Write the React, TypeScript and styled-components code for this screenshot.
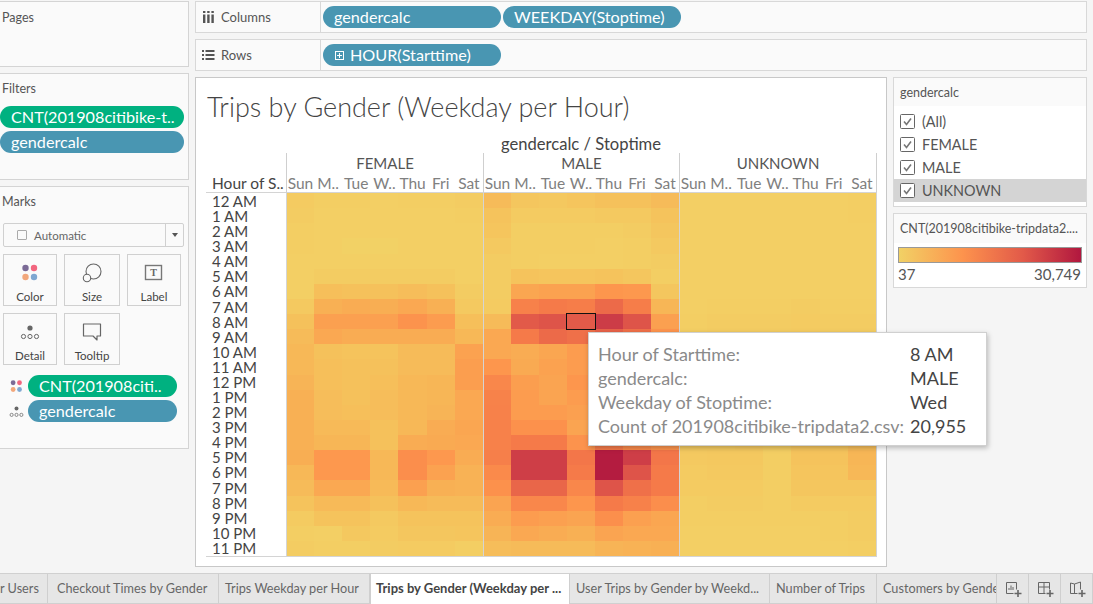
import React from "react";
import styled, { createGlobalStyle } from "styled-components";

const GlobalStyle = createGlobalStyle`
  html, body {
    margin: 0;
    padding: 0;
    background: #f5f5f5;
    font-family: "Lato", "Open Sans", sans-serif;
    color: #555;
  }
  * { box-sizing: border-box; }
`;

const Page = styled.div`
  position: relative;
  width: 1093px;
  height: 604px;
  overflow: hidden;
  display: flex;
  flex-direction: column;
  background: #f5f5f5;
`;

const Workspace = styled.div`
  flex: none;
  height: 573px;
  display: flex;
  gap: 6px;
  padding-top: 1px;
`;

const LeftColumn = styled.div`
  flex: none;
  width: 190px;
  margin-left: -1px;
  display: flex;
  flex-direction: column;
  gap: 6px;
`;

const SidePanel = styled.section<{ $h: number }>`
  height: ${(p) => p.$h}px;
  background: #fafafa;
  border: 1px solid #d4d4d4;
  padding: 0 4px 0 3px;
`;

const PanelTitle = styled.div<{ $first?: boolean }>`
  font-size: 12.5px;
  line-height: 16px;
  color: #555;
  margin-left: -1px;
  padding-top: ${(p) => (p.$first ? "8px" : "7px")};
`;

const Pill = styled.div<{ $green?: boolean; $w?: number }>`
  height: 22px;
  width: ${(p) => (p.$w ? `${p.$w}px` : "100%")};
  flex: none;
  border-radius: 11px;
  background: ${(p) => (p.$green ? "#00b180" : "#4996b2")};
  color: #fff;
  font-size: 16.2px;
  line-height: 22px;
  padding-left: 11px;
  white-space: nowrap;
  overflow: hidden;
  display: flex;
  align-items: center;
  gap: 5px;
`;

const PillStack = styled.div`
  display: flex;
  flex-direction: column;
  gap: 3px;
  margin: 9px 0 0 -3px;
  width: 184px;
`;

const MarkSelect = styled.div`
  margin-top: 13px;
  height: 24px;
  border: 1px solid #d0d0d0;
  border-radius: 2px;
  background: #fafafa;
  display: flex;
  align-items: center;
  font-size: 11.5px;
  color: #666;
  padding-left: 13px;
  gap: 7px;
`;

const MarkSelectArrow = styled.div`
  margin-left: auto;
  width: 18px;
  height: 22px;
  border-left: 1px solid #d0d0d0;
  display: flex;
  align-items: center;
  justify-content: center;
  &::after {
    content: "";
    border-left: 3.5px solid transparent;
    border-right: 3.5px solid transparent;
    border-top: 4px solid #555;
  }
`;

const EmptyBox = styled.span`
  width: 10px;
  height: 10px;
  border: 1px solid #aaa;
  border-radius: 1px;
`;

const MarkGrid = styled.div`
  display: grid;
  grid-template-columns: 54px 56px 54px;
  column-gap: 7px;
  row-gap: 7px;
  margin-top: 7px;
`;

const MarkCard = styled.div`
  height: 52px;
  border: 1px solid #d0d0d0;
  background: #fafafa;
  display: flex;
  flex-direction: column;
  align-items: center;
  font-size: 11.5px;
  color: #444;
  padding-top: 8px;
  svg { flex: none; height: 20px; margin-bottom: 7px; }
`;

const MarkFields = styled.div`
  margin-top: 10px;
  display: flex;
  flex-direction: column;
  gap: 3px;
`;

const MarkField = styled.div`
  display: flex;
  align-items: center;
  gap: 4px;
  padding-left: 6px;
`;

const MainColumn = styled.div`
  flex: 1;
  display: flex;
  flex-direction: column;
  padding-right: 6px;
  min-width: 0;
`;

const Shelf = styled.div`
  height: 32px;
  margin-bottom: 6px;
  background: #fafafa;
  border: 1px solid #d8d8d8;
  display: flex;
`;

const ShelfLabel = styled.div`
  flex: none;
  width: 125px;
  border-right: 1px solid #d8d8d8;
  display: flex;
  align-items: center;
  font-size: 13px;
  color: #555;
  padding-left: 6px;
  gap: 6px;
`;

const ShelfPills = styled.div`
  display: flex;
  align-items: center;
  gap: 2px;
  padding-left: 2px;
`;

const WorkRow = styled.div`
  display: flex;
  gap: 6px;
`;

const VizPanel = styled.section`
  flex: none;
  width: 692px;
  height: 490px;
  background: #fff;
  border: 1px solid #c8c8c8;
  padding: 0 0 0 10px;
`;

const VizTitle = styled.h1`
  margin: 0;
  padding: 13px 0 0 1px;
  font-size: 27px;
  line-height: 32px;
  font-weight: 300;
  color: #444;
  height: 55px;
  white-space: nowrap;
`;

const AxisCaption = styled.div`
  margin-left: 80px;
  width: 590px;
  height: 20px;
  text-align: center;
  font-size: 16.6px;
  line-height: 22px;
  color: #444;
`;

const Table = styled.div`
  display: grid;
  grid-template-columns: 80px 197px 196px 198px;
  grid-template-rows: 40px 363px;
  border-bottom: 1px solid #d4d4d4;
  width: 671px;
`;

const Corner = styled.div`
  border-bottom: 1px solid #d4d4d4;
  display: flex;
  align-items: flex-end;
  padding: 0 0 0 6px;
  font-size: 15.5px;
  line-height: 18px;
  color: #444;
  white-space: nowrap;
`;

const PaneHeader = styled.div<{ $last?: boolean }>`
  border-left: 1px solid #cfcfcf;
  border-right: ${(p) => (p.$last ? "1px solid #cfcfcf" : "none")};
  border-bottom: 1px solid #d4d4d4;
  display: flex;
  flex-direction: column;
`;

const GenderName = styled.div`
  height: 20px;
  text-align: center;
  font-size: 15px;
  line-height: 21px;
  color: #555;
`;

const DayRow = styled.div`
  display: grid;
  grid-template-columns: 27px repeat(6, 1fr);
  height: 19px;
`;

const DayName = styled.span`
  text-align: center;
  font-size: 15.5px;
  line-height: 20px;
  color: #808080;
  white-space: nowrap;
`;

const HourList = styled.div`
  display: grid;
  grid-template-rows: repeat(24, 1fr);
  padding: 1px 0 0 6px;
`;

const HourLabel = styled.div`
  font-size: 15px;
  line-height: 15px;
  color: #444;
  white-space: nowrap;
`;

const Pane = styled.div<{ $last?: boolean }>`
  border-left: 1px solid #d4d4d4;
  border-right: ${(p) => (p.$last ? "1px solid #d4d4d4" : "none")};
  display: grid;
  grid-template-columns: 27px repeat(6, 1fr);
  grid-template-rows: repeat(24, 1fr);
`;

const Cell = styled.div<{ $marked?: boolean }>`
  outline: ${(p) => (p.$marked ? "1px solid #111" : "none")};
  position: ${(p) => (p.$marked ? "relative" : "static")};
`;

const RightColumn = styled.div`
  flex: none;
  width: 194px;
  display: flex;
  flex-direction: column;
  gap: 6px;
`;

const LegendCard = styled.section<{ $h: number }>`
  height: ${(p) => p.$h}px;
  background: #fff;
  border: 1px solid #d8d8d8;
`;

const LegendHead = styled.div<{ $h: number }>`
  height: ${(p) => p.$h}px;
  background: #fafafa;
  font-size: 12.5px;
  color: #555;
  padding: 6px 0 0 6px;
  line-height: 17px;
  white-space: nowrap;
`;

const FilterRow = styled.div<{ $active?: boolean }>`
  height: 23px;
  display: flex;
  align-items: center;
  gap: 7px;
  padding-left: 6px;
  font-size: 14.4px;
  color: #555;
  background: ${(p) => (p.$active ? "#d4d4d4" : "transparent")};
`;

const FilterList = styled.div`
  padding-top: 4px;
`;

const GradientBar = styled.div`
  margin: 4px 4px 0;
  height: 16px;
  border: 1px solid #999;
  background: linear-gradient(90deg, #f1d165 0%, #fd934d 35%, #e25a49 68%, #b1173f 100%);
`;

const GradientScale = styled.div`
  display: flex;
  justify-content: space-between;
  padding: 1px 5px 0 4px;
  font-size: 15px;
  line-height: 20px;
  color: #555;
`;

const Tooltip = styled.div`
  position: absolute;
  left: 588px;
  top: 332px;
  width: 399px;
  height: 114px;
  background: #fff;
  border: 1px solid #d0d0d0;
  box-shadow: 1px 2px 5px rgba(0, 0, 0, 0.25);
  padding: 9px 0 0 9px;
  display: grid;
  grid-template-columns: 312px 1fr;
  grid-auto-rows: 24px;
  font-size: 18px;
  line-height: 24px;
  white-space: nowrap;
`;

const TipKey = styled.span`
  color: #8a8a8a;
`;

const TipValue = styled.span`
  color: #444;
`;

const TabBar = styled.nav`
  flex: none;
  height: 31px;
  background: #e6e6e6;
  border-top: 1px solid #d0d0d0;
  border-bottom: 1px solid #d0d0d0;
  display: flex;
`;

const Tab = styled.div<{ $w: number; $pad: number; $active?: boolean }>`
  flex: none;
  width: ${(p) => p.$w}px;
  height: ${(p) => (p.$active ? "30px" : "29px")};
  background: ${(p) => (p.$active ? "#fff" : "transparent")};
  border-right: 1px solid #cfcfcf;
  border-left: ${(p) => (p.$active ? "1px solid #cfcfcf" : "none")};
  font-size: ${(p) => (p.$active ? "13px" : "12.7px")};
  font-weight: ${(p) => (p.$active ? 700 : 400)};
  color: ${(p) => (p.$active ? "#444" : "#666")};
  line-height: 29px;
  padding-left: ${(p) => p.$pad}px;
  white-space: nowrap;
  overflow: hidden;
`;

const TabIcon = styled.div`
  flex: none;
  width: 32px;
  height: 29px;
  border-right: 1px solid #cfcfcf;
  display: flex;
  align-items: center;
  justify-content: center;
`;

const DotsIcon = ({ size = 20 }: { size?: number }) => (
  <svg width={size} height={size} viewBox="0 0 20 20">
    <circle cx="5.5" cy="5" r="3.2" fill="#7b6a96" />
    <circle cx="14" cy="5" r="3.2" fill="#f2667f" />
    <circle cx="5.5" cy="14" r="3.2" fill="#f2a77b" />
    <circle cx="14" cy="14" r="3.2" fill="#7fa7d1" />
  </svg>
);

const SizeIcon = () => (
  <svg width="20" height="20" viewBox="0 0 20 20" fill="none" stroke="#666" strokeWidth="1.1">
    <circle cx="11.5" cy="8.5" r="7.5" fill="#fafafa" />
    <circle cx="5" cy="15" r="3.7" fill="#fafafa" />
  </svg>
);

const LabelIcon = () => (
  <svg width="20" height="20" viewBox="0 0 20 20" fill="none">
    <rect x="1.5" y="2.5" width="16" height="14" stroke="#777" strokeWidth="1.4" />
    <text x="9.5" y="13" fontSize="10" fontWeight="700" fontFamily="Liberation Serif" fill="#666" textAnchor="middle">T</text>
  </svg>
);

const DetailIcon = ({ size = 20 }: { size?: number }) => (
  <svg width={size} height={size} viewBox="0 0 20 20" fill="none" stroke="#666">
    <circle cx="10" cy="6" r="2.6" fill="#666" stroke="none" />
    <circle cx="3.5" cy="14.5" r="2.1" />
    <circle cx="10" cy="14.5" r="2.1" />
    <circle cx="16.5" cy="14.5" r="2.1" />
  </svg>
);

const TooltipIcon = () => (
  <svg width="20" height="20" viewBox="0 0 20 20" fill="none" stroke="#666" strokeWidth="1.2">
    <path d="M1.5 2h17v12h-3.5v4l-4-4H1.5z" strokeLinejoin="round" />
  </svg>
);

const ColumnsIcon = () => (
  <svg width="13" height="12" viewBox="0 0 13 12" fill="#555">
    <rect x="1" y="0" width="2.4" height="2" />
    <rect x="1" y="3.5" width="2.4" height="8.5" />
    <rect x="5.2" y="0" width="2.4" height="2" />
    <rect x="5.2" y="3.5" width="2.4" height="8.5" />
    <rect x="9.4" y="0" width="2.4" height="2" />
    <rect x="9.4" y="3.5" width="2.4" height="8.5" />
  </svg>
);

const RowsIcon = () => (
  <svg width="13" height="12" viewBox="0 0 13 12" fill="#555">
    <rect x="0" y="1" width="2" height="2" />
    <rect x="3.5" y="1" width="9" height="2" />
    <rect x="0" y="5" width="2" height="2" />
    <rect x="3.5" y="5" width="9" height="2" />
    <rect x="0" y="9" width="2" height="2" />
    <rect x="3.5" y="9" width="9" height="2" />
  </svg>
);

const PlusBoxIcon = () => (
  <svg width="11" height="11" viewBox="0 0 11 11" fill="none" stroke="#fff">
    <rect x="1.5" y="1.5" width="8" height="8" />
    <path d="M5.500 3v5M3 5.500h5" />
  </svg>
);

const CheckIcon = () => (
  <svg width="15" height="15" viewBox="0 0 15 15" fill="none">
    <rect x="0.5" y="0.5" width="14" height="14" rx="1" fill="#fff" stroke="#666" />
    <path d="M4 7.500l2.500 3L11 4.500" stroke="#777" strokeWidth="1.6" />
  </svg>
);

const NewSheetIcon = () => (
  <svg width="18" height="18" viewBox="0 0 18 18" fill="none" stroke="#666">
    <path d="M12.500 9.500v-7h-10v11h7" />
    <path d="M5 10V8M7 10V5.500M9 10V7" />
    <path d="M14 10v7M10.500 13.500h7" strokeWidth="1.6" />
  </svg>
);

const NewDashboardIcon = () => (
  <svg width="18" height="18" viewBox="0 0 18 18" fill="none" stroke="#666">
    <path d="M9.500 13.500h-7v-11h11v7M2.500 7h11M8 2.500v11" />
    <path d="M14 10v7M10.500 13.500h7" strokeWidth="1.6" />
  </svg>
);

const NewStoryIcon = () => (
  <svg width="18" height="18" viewBox="0 0 18 18" fill="none" stroke="#666">
    <path d="M9.500 13.500h-7V3l4 1 6-2v7.500M6.500 4v9" />
    <path d="M14 10v7M10.500 13.500h7" strokeWidth="1.6" />
  </svg>
);

const RAMP: [number, number[]][] = [
  [0, [242, 210, 102]],
  [10, [245, 195, 92]],
  [20, [248, 176, 84]],
  [33, [253, 150, 77]],
  [50, [245, 122, 73]],
  [66, [226, 90, 73]],
  [85, [206, 62, 71]],
  [100, [180, 28, 64]],
];

const heat = (v: number) => {
  for (let i = 1; i < RAMP.length; i++) {
    const [top, hi] = RAMP[i];
    const [bottom, lo] = RAMP[i - 1];
    if (v <= top) {
      const t = (v - bottom) / (top - bottom);
      const c = lo.map((x, k) => Math.round(x + (hi[k] - x) * t));
      return `rgb(${c.join(",")})`;
    }
  }
  return "rgb(180,28,64)";
};

const HOURS = [
  "12 AM", "1 AM", "2 AM", "3 AM", "4 AM", "5 AM", "6 AM", "7 AM", "8 AM", "9 AM", "10 AM", "11 AM",
  "12 PM", "1 PM", "2 PM", "3 PM", "4 PM", "5 PM", "6 PM", "7 PM", "8 PM", "9 PM", "10 PM", "11 PM",
];

const DAYS = ["Sun", "M..", "Tue", "W..", "Thu", "Fri", "Sat"];

const PANES: { name: string; rows: number[][] }[] = [
  {
    name: "FEMALE",
    rows: [
      [5, 3, 3, 2, 3, 3, 4],
      [4, 2, 2, 2, 2, 2, 3],
      [3, 2, 2, 2, 2, 2, 2],
      [3, 2, 1, 1, 2, 2, 2],
      [2, 2, 2, 2, 2, 2, 2],
      [2, 4, 4, 4, 4, 4, 2],
      [2, 12, 11, 11, 13, 11, 4],
      [6, 20, 22, 21, 24, 20, 6],
      [11, 28, 28, 28, 35, 30, 12],
      [14, 24, 22, 22, 22, 22, 16],
      [16, 11, 10, 10, 14, 14, 27],
      [16, 12, 11, 11, 14, 14, 29],
      [18, 12, 11, 12, 16, 17, 29],
      [20, 13, 11, 13, 16, 17, 24],
      [20, 13, 12, 13, 16, 18, 24],
      [20, 15, 15, 11, 16, 22, 25],
      [20, 17, 17, 11, 22, 23, 24],
      [21, 32, 32, 16, 38, 32, 22],
      [16, 32, 32, 16, 38, 27, 19],
      [14, 24, 24, 15, 28, 20, 19],
      [10, 15, 15, 11, 16, 14, 14],
      [5, 10, 10, 6, 10, 10, 10],
      [3, 2, 7, 5, 8, 8, 9],
      [4, 3, 3, 4, 5, 5, 3],
    ],
  },
  {
    name: "MALE",
    rows: [
      [14, 8, 7, 9, 11, 11, 14],
      [10, 5, 5, 5, 6, 6, 10],
      [9, 3, 3, 3, 3, 4, 8],
      [6, 3, 3, 3, 2, 3, 6],
      [4, 3, 2, 2, 2, 3, 4],
      [4, 10, 9, 9, 10, 8, 3],
      [4, 25, 27, 27, 33, 32, 8],
      [5, 46, 50, 48, 58, 48, 17],
      [14, 66, 70, 66, 86, 70, 28],
      [24, 50, 58, 55, 62, 55, 34],
      [24, 22, 25, 30, 34, 30, 30],
      [33, 23, 27, 30, 34, 30, 30],
      [42, 29, 26, 33, 34, 30, 30],
      [45, 30, 26, 30, 34, 30, 30],
      [46, 30, 30, 28, 34, 30, 30],
      [46, 36, 36, 26, 40, 34, 32],
      [46, 50, 50, 35, 50, 40, 34],
      [47, 85, 85, 52, 100, 85, 52],
      [40, 85, 85, 50, 100, 70, 50],
      [36, 60, 60, 42, 70, 55, 50],
      [26, 42, 42, 33, 50, 46, 38],
      [22, 30, 28, 26, 37, 28, 25],
      [18, 24, 22, 20, 26, 24, 24],
      [13, 14, 14, 14, 18, 19, 20],
    ],
  },
  {
    name: "UNKNOWN",
    rows: [
      [2, 2, 2, 2, 2, 2, 3],
      [2, 2, 2, 2, 2, 2, 3],
      [2, 2, 2, 2, 2, 2, 2],
      [2, 2, 2, 2, 2, 2, 2],
      [2, 2, 2, 2, 2, 2, 2],
      [2, 2, 2, 2, 2, 2, 2],
      [2, 2, 2, 2, 2, 2, 2],
      [2, 3, 3, 3, 4, 3, 3],
      [3, 4, 4, 4, 5, 4, 4],
      [3, 4, 4, 4, 5, 4, 4],
      [3, 3, 4, 4, 4, 4, 5],
      [3, 3, 4, 4, 4, 4, 5],
      [3, 3, 4, 4, 5, 5, 6],
      [3, 4, 4, 4, 5, 5, 6],
      [3, 4, 4, 4, 5, 5, 8],
      [4, 5, 5, 4, 8, 8, 11],
      [5, 5, 6, 4, 9, 9, 13],
      [6, 7, 7, 3, 10, 10, 17],
      [5, 6, 6, 3, 9, 9, 16],
      [5, 5, 5, 3, 8, 8, 8],
      [3, 4, 4, 3, 5, 5, 5],
      [3, 3, 3, 3, 3, 3, 4],
      [2, 2, 2, 2, 2, 3, 4],
      [2, 2, 2, 2, 2, 2, 3],
    ],
  },
];

const FILTERS = ["(All)", "FEMALE", "MALE", "UNKNOWN"];

const TIP_ROWS = [
  ["Hour of Starttime:", "8 AM"],
  ["gendercalc:", "MALE"],
  ["Weekday of Stoptime:", "Wed"],
  ["Count of 201908citibike-tripdata2.csv:", "20,955"],
];

const TABS = [
  { label: "r Users", w: 48, pad: 0 },
  { label: "Checkout Times by Gender", w: 171, pad: 9 },
  { label: "Trips Weekday per Hour", w: 151, pad: 6 },
  { label: "Trips by Gender (Weekday per ...", w: 200, pad: 5, active: true },
  { label: "User Trips by Gender by Weekd...", w: 200, pad: 6 },
  { label: "Number of Trips", w: 107, pad: 6 },
  { label: "Customers by Gender", w: 120, pad: 6 },
];

export default function App() {
  return (
    <Page>
      <GlobalStyle />
      <Workspace>
        <LeftColumn>
          <SidePanel $h={66}>
            <PanelTitle $first>Pages</PanelTitle>
          </SidePanel>
          <SidePanel $h={107}>
            <PanelTitle>Filters</PanelTitle>
            <PillStack>
              <Pill $green>CNT(201908citibike-t..</Pill>
              <Pill>gendercalc</Pill>
            </PillStack>
          </SidePanel>
          <SidePanel $h={263}>
            <PanelTitle>Marks</PanelTitle>
            <MarkSelect>
              <EmptyBox />
              Automatic
              <MarkSelectArrow />
            </MarkSelect>
            <MarkGrid>
              <MarkCard><DotsIcon />Color</MarkCard>
              <MarkCard><SizeIcon />Size</MarkCard>
              <MarkCard><LabelIcon />Label</MarkCard>
              <MarkCard><DetailIcon />Detail</MarkCard>
              <MarkCard><TooltipIcon />Tooltip</MarkCard>
            </MarkGrid>
            <MarkFields>
              <MarkField><DotsIcon size={15} /><Pill $green $w={149}>CNT(201908citi..</Pill></MarkField>
              <MarkField><DetailIcon size={15} /><Pill $w={149}>gendercalc</Pill></MarkField>
            </MarkFields>
          </SidePanel>
        </LeftColumn>

        <MainColumn>
          <Shelf>
            <ShelfLabel><ColumnsIcon />Columns</ShelfLabel>
            <ShelfPills>
              <Pill $w={178}>gendercalc</Pill>
              <Pill $w={178}>WEEKDAY(Stoptime)</Pill>
            </ShelfPills>
          </Shelf>
          <Shelf>
            <ShelfLabel><RowsIcon />Rows</ShelfLabel>
            <ShelfPills>
              <Pill $w={178}><PlusBoxIcon />HOUR(Starttime)</Pill>
            </ShelfPills>
          </Shelf>
          <WorkRow>
            <VizPanel>
              <VizTitle>Trips by Gender (Weekday per Hour)</VizTitle>
              <AxisCaption>gendercalc / Stoptime</AxisCaption>
              <Table>
                <Corner>Hour of S..</Corner>
                {PANES.map((pane, i) => (
                  <PaneHeader key={pane.name} $last={i === 2}>
                    <GenderName>{pane.name}</GenderName>
                    <DayRow>
                      {DAYS.map((d) => (
                        <DayName key={d}>{d}</DayName>
                      ))}
                    </DayRow>
                  </PaneHeader>
                ))}
                <HourList>
                  {HOURS.map((h) => (
                    <HourLabel key={h}>{h}</HourLabel>
                  ))}
                </HourList>
                {PANES.map((pane, i) => (
                  <Pane key={pane.name} $last={i === 2}>
                    {pane.rows.flatMap((row, r) =>
                      row.map((v, c) => (
                        <Cell
                          key={`${r}-${c}`}
                          $marked={i === 1 && r === 8 && c === 3}
                          style={{ background: heat(v) }}
                        />
                      ))
                    )}
                  </Pane>
                ))}
              </Table>
            </VizPanel>
            <RightColumn>
              <LegendCard $h={130}>
                <LegendHead $h={28}>gendercalc</LegendHead>
                <FilterList>
                  {FILTERS.map((f) => (
                    <FilterRow key={f} $active={f === "UNKNOWN"}>
                      <CheckIcon />
                      {f}
                    </FilterRow>
                  ))}
                </FilterList>
              </LegendCard>
              <LegendCard $h={75}>
                <LegendHead $h={29}>CNT(201908citibike-tripdata2....</LegendHead>
                <GradientBar />
                <GradientScale>
                  <span>37</span>
                  <span>30,749</span>
                </GradientScale>
              </LegendCard>
            </RightColumn>
          </WorkRow>
        </MainColumn>
      </Workspace>

      <TabBar>
        {TABS.map((t) => (
          <Tab key={t.label} $w={t.w} $pad={t.pad} $active={t.active}>{t.label}</Tab>
        ))}
        <TabIcon><NewSheetIcon /></TabIcon>
        <TabIcon><NewDashboardIcon /></TabIcon>
        <TabIcon><NewStoryIcon /></TabIcon>
      </TabBar>

      <Tooltip>
        {TIP_ROWS.map(([k, v]) => (
          <React.Fragment key={k}>
            <TipKey>{k}</TipKey>
            <TipValue>{v}</TipValue>
          </React.Fragment>
        ))}
      </Tooltip>
    </Page>
  );
}
